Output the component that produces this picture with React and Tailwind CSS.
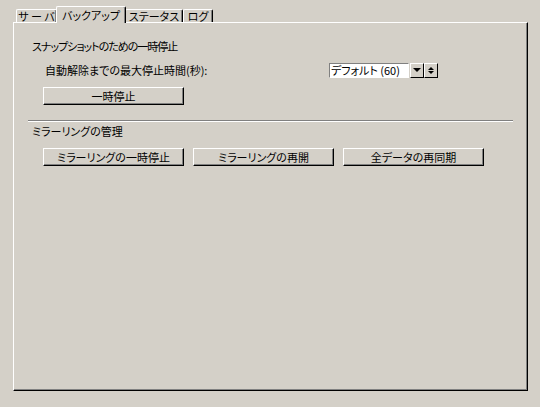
import React from "react";

const Tab = ({ label, active, width }) => (
  <div
    className={`flex items-center justify-center whitespace-nowrap border-l border-t border-r border-l-white border-t-white border-r-black rounded-tl-[2px] rounded-tr-[2px] shadow-[inset_-1px_0_0_#808080] bg-[#d4d0c8] ${
      active ? "h-[17px] -mb-[1px] relative z-10 -mx-[1px]" : "h-[13px]"
    } ${width}`}
  >
    <span className="leading-none">{label}</span>
  </div>
);

const Button = ({ children, className = "" }) => (
  <button
    className={`flex items-center justify-center whitespace-nowrap h-[18px] bg-[#d4d0c8] border-l border-t border-l-white border-t-white border-r border-b border-r-black border-b-black shadow-[inset_-1px_-1px_0_#808080] leading-none ${className}`}
  >
    {children}
  </button>
);

const Arrow = ({ up, big }) => (
  <div
    className={`w-0 h-0 border-l-transparent border-r-transparent ${
      big ? "border-l-[4px] border-r-[4px]" : "border-l-[3px] border-r-[3px]"
    } ${
      up
        ? "border-b-[3px] border-b-black"
        : big
        ? "border-t-[4px] border-t-black"
        : "border-t-[3px] border-t-black"
    }`}
  />
);

export default function App() {
  return (
    <div className="w-[540px] h-[407px] bg-[#d4d0c8] text-black text-[11px] font-['Noto_Sans_CJK_JP','Noto_Sans',sans-serif] [font-feature-settings:'palt'] pt-[6px] pl-[13px]">
      <div className="flex items-end h-[16px] ml-[3px]">
        <Tab label="サ ー バ" width="w-[41px]" />
        <Tab label="バックアップ" active width="w-[70px]" />
        <Tab label="ステータス" width="w-[58px]" />
        <Tab label="ログ" width="w-[30px]" />
      </div>

      <div className="w-[515px] h-[369px] border-l border-t border-l-white border-t-white border-r border-b border-r-black border-b-black shadow-[inset_-1px_-1px_0_#808080] pt-[15px]">
        <div className="h-[16px] flex items-center pl-[18px] tracking-[-1px]">
          スナップショットのための一時停止
        </div>

        <div className="h-[16px] mt-[8px] flex items-center pl-[31px]">
          <span className="flex-1">自動解除までの最大停止時間(秒):</span>
          <div className="flex items-center h-[15px] mr-[89px]">
            <div className="w-[80px] h-full bg-white border-l border-t border-l-[#808080] border-t-[#808080] border-r border-b border-r-white border-b-white flex items-center pl-[1px] leading-none">
              デフォルト (60)
            </div>
            <div className="ml-[1px] w-[14px] h-full bg-[#d4d0c8] border-l border-t border-l-white border-t-white border-r border-b border-r-black border-b-black flex items-center justify-center">
              <Arrow big />
            </div>
            <div className="w-[14px] h-full bg-[#d4d0c8] border-l border-t border-l-white border-t-white border-r border-b border-r-black border-b-black flex flex-col items-center justify-center gap-[1px]">
              <Arrow up />
              <Arrow />
            </div>
          </div>
        </div>

        <div className="pl-[29px] mt-[9px]">
          <Button className="w-[141px]">一時停止</Button>
        </div>

        <div className="mx-[14px] mt-[15px] border-t border-t-[#808080] border-b border-b-white" />

        <div className="h-[16px] mt-[1px] flex items-center pl-[18px]">
          ミラーリングの管理
        </div>

        <div className="flex gap-[9px] pl-[29px] mt-[9px]">
          <Button className="w-[141px]">ミラーリングの一時停止</Button>
          <Button className="w-[141px]">ミラーリングの再開</Button>
          <Button className="w-[141px]">全データの再同期</Button>
        </div>
      </div>
    </div>
  );
}
